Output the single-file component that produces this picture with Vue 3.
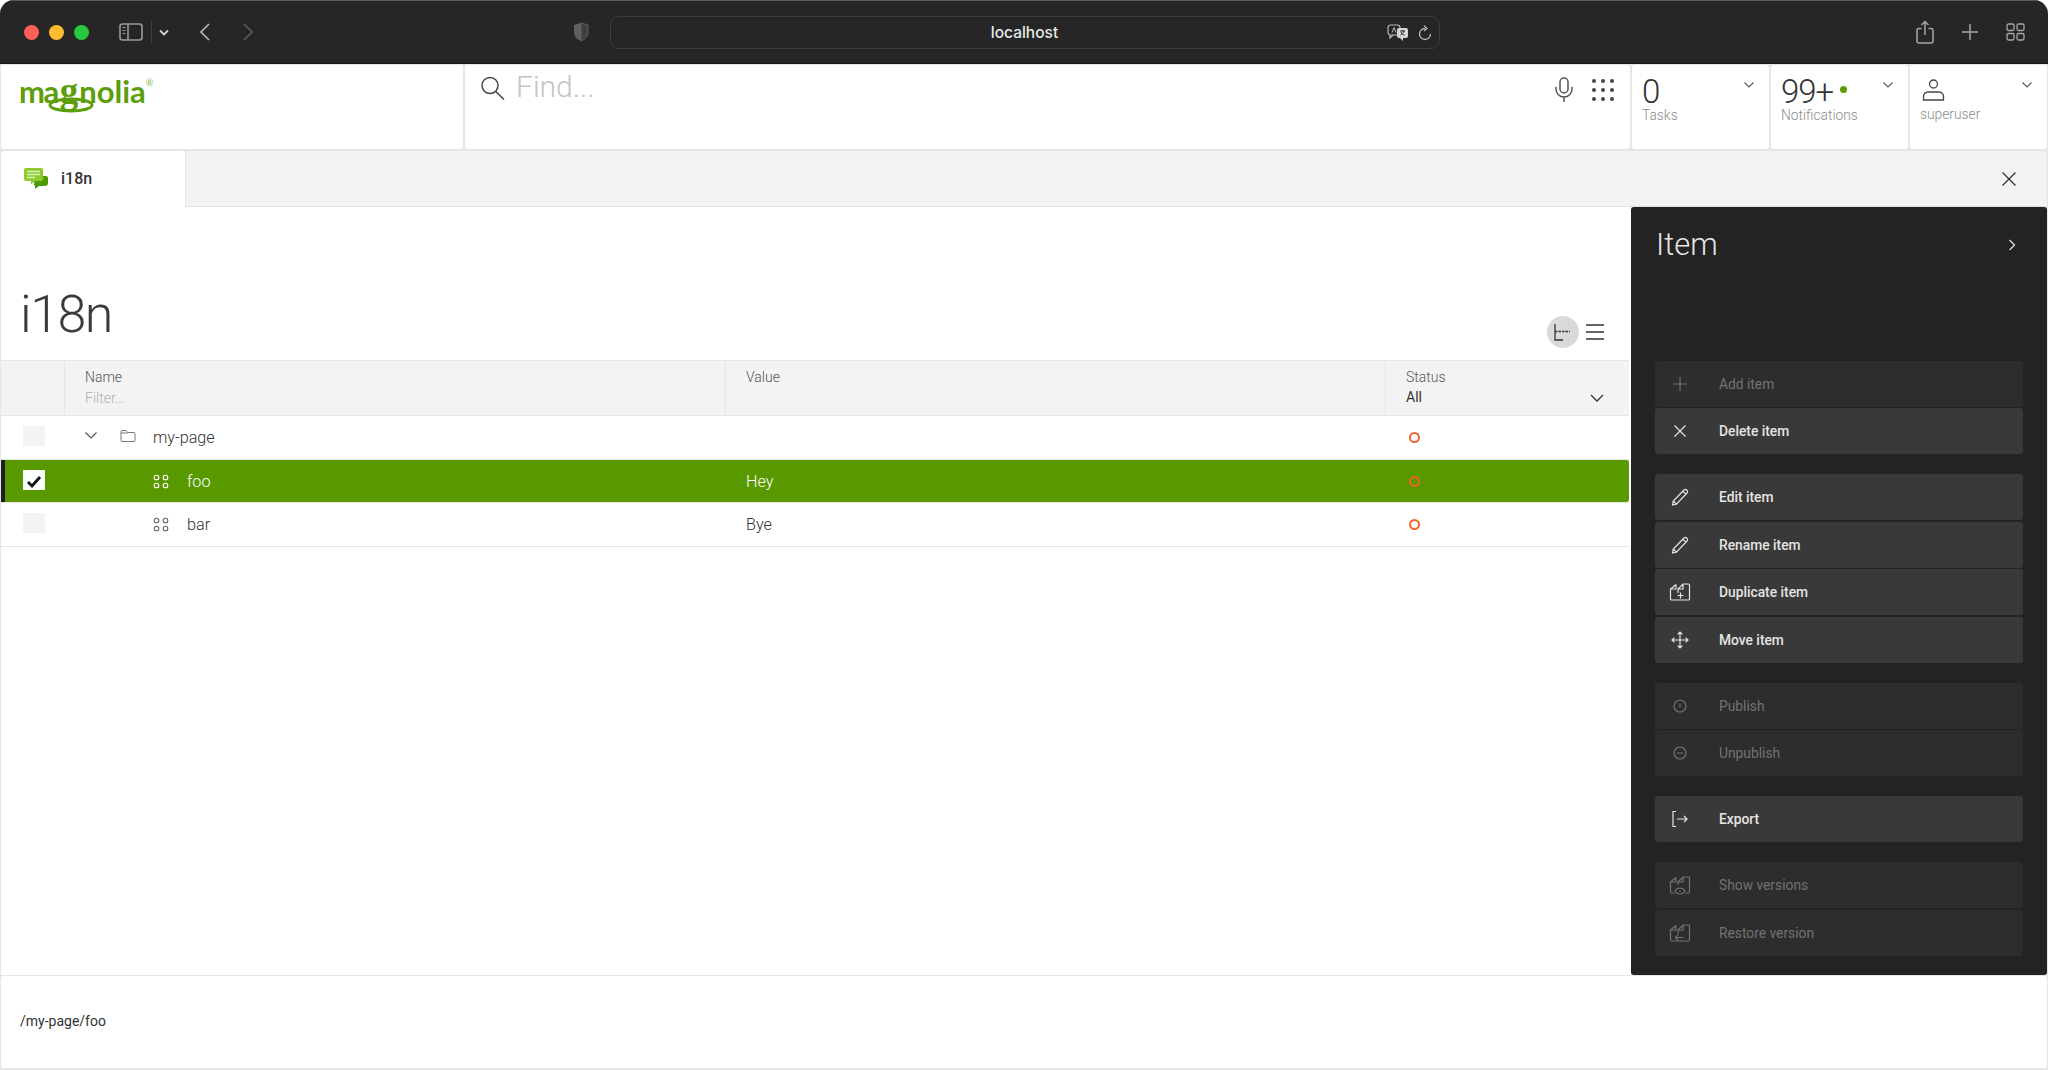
<script setup>
const actionGroups = [
  [
    { label: 'Add item', off: true, d: 'M12 5v14M5 12h14' },
    { label: 'Delete item', d: 'M6.5 6.5l11 11M17.5 6.5l-11 11' }
  ],
  [
    { label: 'Edit item', d: 'M4.5 20l.8-4L16 5a1.9 1.9 0 0 1 2.7 0l.3.3a1.9 1.9 0 0 1 0 2.7L8.4 19.1zM5.3 16l3.1 3.1M14.8 6.2l3 3' },
    { label: 'Rename item', d: 'M4.5 20l.8-4L16 5a1.9 1.9 0 0 1 2.7 0l.3.3a1.9 1.9 0 0 1 0 2.7L8.4 19.1zM5.3 16l3.1 3.1M14.8 6.2l3 3' },
    { label: 'Duplicate item', d: 'M8 4.5L2.500 9v10a1 1 0 0 0 1 1H20.500a1 1 0 0 0 1-1V5a1 1 0 0 0-1-1H15l-5 5v4M2.500 9H8V4.500M15 4v5h-5M9.500 15.500h6M12.500 12.500v6' },
    { label: 'Move item', d: 'M12 4v16M4 12h16M9.6 6.4L12 4l2.4 2.4M9.6 17.6L12 20l2.4-2.4M6.4 9.6L4 12l2.4 2.4M17.6 9.6L20 12l-2.4 2.4' }
  ],
  [
    { label: 'Publish', off: true, d: 'M12 6a6 6 0 1 0 0 12 6 6 0 0 0 0-12zM12 9.5v4' },
    { label: 'Unpublish', off: true, d: 'M12 6a6 6 0 1 0 0 12 6 6 0 0 0 0-12zM9 12h6' }
  ],
  [
    { label: 'Export', d: 'M8 4.5H5v15h3M9 12h10M16 9l3 3-3 3' }
  ],
  [
    { label: 'Show versions', off: true, d: 'M8 4.5L2.500 9v10a1 1 0 0 0 1 1h3M17.500 20h3a1 1 0 0 0 1-1V5a1 1 0 0 0-1-1H15l-5 5v3M2.500 9H8V4.500M15 4v5h-5M7 18s2-3 5-3 5 3 5 3-2 3-5 3-5-3-5-3zM12 17.200v1.500' },
    { label: 'Restore version', off: true, d: 'M8 4.5L2.500 9v10a1 1 0 0 0 1 1H20.500a1 1 0 0 0 1-1V5a1 1 0 0 0-1-1H15l-5 5v4M2.500 9H8V4.500M15 4v5h-5M7.500 16.500h8M10 14l-2.500 2.500L10 19' }
  ]
]

const rows = [
  { name: 'my-page', value: '', folder: true },
  { name: 'foo', value: 'Hey', selected: true },
  { name: 'bar', value: 'Bye' }
]

const dots = Array.from({ length: 9 })

const indicators = [
  { big: '0', label: 'Tasks' },
  { big: '99+', label: 'Notifications', dot: true }
]
</script>

<template>
  <div class="window">
    <div class="toolbar">
      <div class="lights">
        <span class="light red"></span>
        <span class="light yellow"></span>
        <span class="light green"></span>
      </div>
      <svg class="tb sidebar" width="24" height="18" viewBox="0 0 24 18" fill="none" stroke="#9a9a9a" stroke-width="1.6">
        <rect x="1" y="1" width="22" height="16" rx="2.5" />
        <path d="M9 1v16" />
        <path d="M3.5 4.5h3M3.5 7.5h3M3.5 10.5h3" stroke-width="1.2" />
      </svg>
      <span class="tb-divider"></span>
      <svg class="tb" width="10" height="7" viewBox="0 0 10 7" fill="none" stroke="#d0d0d0" stroke-width="1.8">
        <path d="M1 1.5l4 4 4-4" />
      </svg>
      <svg class="tb back" width="11" height="18" viewBox="0 0 11 18" fill="none" stroke="#b5b5b5" stroke-width="1.7">
        <path d="M10 1L2 9l8 8" />
      </svg>
      <svg class="tb forward" width="11" height="18" viewBox="0 0 11 18" fill="none" stroke="#5c5c5c" stroke-width="1.7">
        <path d="M1 1l8 8-8 8" />
      </svg>
      <svg class="tb shield" width="18" height="20" viewBox="0 0 18 20">
        <path d="M9 1L2 3v7c0 4.500 3 7.500 7 9z" fill="#5f5f5f" />
        <path d="M9 1l7 2v7c0 4.500-3 7.500-7 9z" fill="#3f3f3f" stroke="#5f5f5f" />
      </svg>
      <div class="urlbar">
        <span class="url">localhost</span>
        <svg class="translate" width="22" height="17" viewBox="0 0 22 17" fill="none">
          <rect x="1" y="1" width="12" height="10" rx="2.500" stroke="#b8b8b8" stroke-width="1.200" />
          <path d="M3 11v3l3-3" stroke="#b8b8b8" stroke-width="1.200" />
          <path d="M5 8.500l2-5 2 5" stroke="#b8b8b8" stroke-width="1" />
          <rect x="10" y="4" width="11" height="10" rx="2" fill="#d6d6d6" />
          <path d="M16 14v3l-3-3z" fill="#d6d6d6" />
          <path d="M13 7h5M15.500 6v1M17 7c-.5 2-2 3.500-3.500 4M14 8c.5 1.500 2 2.800 3.500 3" stroke="#262626" stroke-width="1" />
        </svg>
        <svg class="reload" width="14" height="16" viewBox="0 0 14 16" fill="none" stroke="#b8b8b8" stroke-width="1.300">
          <path d="M7 3.500a5.500 5.500 0 1 0 5.500 5.500" />
          <path d="M6 .8L9 3.500 6 6" />
        </svg>
      </div>
      <div class="tb-right">
        <svg width="18" height="24" viewBox="0 0 18 24" fill="none" stroke="#a6a6a6" stroke-width="1.500">
          <path d="M5.500 8.500H3a2 2 0 0 0-2 2V21a2 2 0 0 0 2 2h12a2 2 0 0 0 2-2V10.500a2 2 0 0 0-2-2h-2.500" />
          <path d="M9 15V1.500M5.500 5L9 1.500 12.500 5" />
        </svg>
        <svg width="18" height="18" viewBox="0 0 18 18" fill="none" stroke="#a6a6a6" stroke-width="1.500">
          <path d="M9 1v16M1 9h16" />
        </svg>
        <svg width="19" height="18" viewBox="0 0 19 18" fill="none" stroke="#a6a6a6" stroke-width="1.300">
          <rect x="1" y="1" width="7" height="6.500" rx="1.500" />
          <rect x="11" y="1" width="7" height="6.500" rx="1.500" />
          <rect x="1" y="10.500" width="7" height="6.500" rx="1.500" />
          <rect x="11" y="10.500" width="7" height="6.500" rx="1.500" />
        </svg>
      </div>
    </div>

    <header class="appbar">
      <div class="cell logo-cell">
        <div class="logo">
          <span class="logo-ma">ma</span><span class="logo-g">g</span><span class="logo-rest">nolia</span><span class="logo-r">®</span>
          <svg class="logo-loop" width="46" height="16" viewBox="0 0 46 16" fill="none">
            <ellipse cx="23" cy="8" rx="21" ry="6" stroke="#5c9e0c" stroke-width="3" />
          </svg>
        </div>
      </div>
      <div class="cell search-cell">
        <svg class="search-icon" width="25" height="24" viewBox="0 0 25 24" fill="none" stroke="#444" stroke-width="1.500">
          <circle cx="10" cy="9.500" r="8" />
          <path d="M15.800 15.500L24 23.500" />
        </svg>
        <span class="find">Find...</span>
        <svg class="mic" width="18" height="25" viewBox="0 0 18 25" fill="none" stroke="#555" stroke-width="1.500">
          <rect x="5" y="1" width="8" height="15" rx="4" />
          <path d="M1 10v2a8 8 0 0 0 16 0v-2M9 20v5" />
        </svg>
        <div class="apps">
          <span v-for="(d, i) in dots" :key="i" class="app-dot"></span>
        </div>
      </div>
      <div v-for="item in indicators" :key="item.label" class="cell indicator">
        <div class="big">{{ item.big }}<span v-if="item.dot" class="note-dot"></span></div>
        <div class="small">{{ item.label }}</div>
        <svg class="chev" width="10" height="6" viewBox="0 0 10 6" fill="none" stroke="#555" stroke-width="1.100">
          <path d="M.5.500L5 5 9.500.500" />
        </svg>
      </div>
      <div class="cell indicator user">
        <svg class="user-icon" width="23" height="22" viewBox="0 0 23 22" fill="none" stroke="#444" stroke-width="1.300">
          <circle cx="11.500" cy="5" r="4" />
          <path d="M1.500 21v-3.500A4.500 4.500 0 0 1 6 13h11a4.500 4.500 0 0 1 4.500 4.500V21z" />
        </svg>
        <div class="small">superuser</div>
        <svg class="chev" width="10" height="6" viewBox="0 0 10 6" fill="none" stroke="#555" stroke-width="1.100">
          <path d="M.5.500L5 5 9.500.500" />
        </svg>
      </div>
    </header>

    <div class="tabbar">
      <div class="tab">
        <svg width="24" height="21" viewBox="0 0 24 21">
          <path d="M11 8h11a2 2 0 0 1 2 2v5a3 3 0 0 1-3 3h-6l-4 3v-3l-1-1z" fill="#4c9a05" />
          <path d="M2 0h15a2 2 0 0 1 2 2v9a2 2 0 0 1-2 2H11l-4 3.500V13H2a2 2 0 0 1-2-2V2a2 2 0 0 1 2-2z" fill="#8ccb2e" />
          <path d="M3 3.500h13M3 6.500h13M3 9.500h8" stroke="#d9f0b4" stroke-width="1.300" />
        </svg>
        <span class="tab-title">i18n</span>
      </div>
      <div class="tab-rest">
        <svg width="16" height="16" viewBox="0 0 16 16" fill="none" stroke="#333" stroke-width="1.300">
          <path d="M1.500 1.500l13 13M14.500 1.500l-13 13" />
        </svg>
      </div>
    </div>

    <main class="main">
      <section class="workspace">
        <div class="title-row">
          <h1 class="title">i18n</h1>
          <div class="view-toggle">
            <span class="view-btn active">
              <svg width="18" height="18" viewBox="0 0 18 18" fill="none" stroke="#333" stroke-width="1.300">
                <path d="M1 1v16h8" />
                <path d="M1 8.500h15" stroke-dasharray="2.500 1" />
              </svg>
            </span>
            <span class="view-btn">
              <svg width="18" height="16" viewBox="0 0 18 16" fill="none" stroke="#333" stroke-width="1.300">
                <path d="M0 1h18M0 8h18M0 15h18" />
              </svg>
            </span>
          </div>
        </div>

        <div class="grid head">
          <div class="col-check"></div>
          <div class="hcell">
            <span class="hlabel">Name</span>
            <span class="hfilter">Filter...</span>
          </div>
          <div class="hcell">
            <span class="hlabel">Value</span>
          </div>
          <div class="hcell status-head">
            <span class="hlabel">Status</span>
            <span class="hall">All</span>
            <svg class="all-chev" width="14" height="8" viewBox="0 0 14 8" fill="none" stroke="#333" stroke-width="1.300">
              <path d="M1 1l6 6 6-6" />
            </svg>
          </div>
        </div>

        <div class="rows">
          <div v-for="row in rows" :key="row.name" class="grid row" :class="{ selected: row.selected }">
            <div class="check-cell">
              <span class="checkbox">
                <svg v-if="row.selected" width="16" height="14" viewBox="0 0 16 14" fill="none" stroke="#111" stroke-width="2.800">
                  <path d="M2 8l4 4 8-9" />
                </svg>
              </span>
            </div>
            <div class="name-cell" :class="{ child: !row.folder }">
              <template v-if="row.folder">
                <svg class="expand" width="12" height="7" viewBox="0 0 12 7" fill="none" stroke="#555" stroke-width="1.200">
                  <path d="M.5.500L6 6 11.500.500" />
                </svg>
                <svg class="folder" width="16" height="12" viewBox="0 0 16 12" fill="none" stroke="#777" stroke-width="1">
                  <path d="M1 10.500v-9a1 1 0 0 1 1-1h4l1.500 2H14a1 1 0 0 1 1 1v7a1 1 0 0 1-1 1H2a1 1 0 0 1-1-1zM1 3h6.500" />
                </svg>
              </template>
              <svg v-else class="node" width="16" height="15" viewBox="0 0 16 15" fill="none" stroke="currentColor" stroke-width="1.100">
                <circle cx="3.500" cy="3.500" r="2.300" />
                <circle cx="12.500" cy="3.500" r="2.300" />
                <circle cx="3.500" cy="11.500" r="2.300" />
                <circle cx="12.500" cy="11.500" r="2.300" />
              </svg>
              <span class="name">{{ row.name }}</span>
            </div>
            <div class="value-cell">{{ row.value }}</div>
            <div class="status-cell"><span class="ring"></span></div>
          </div>
        </div>
      </section>

      <aside class="panel">
        <div class="panel-head">
          <span class="panel-title">Item</span>
          <svg width="8" height="12" viewBox="0 0 8 12" fill="none" stroke="#ddd" stroke-width="1.300">
            <path d="M1.500 1l5 5-5 5" />
          </svg>
        </div>
        <div class="actions">
          <div v-for="(group, gi) in actionGroups" :key="gi" class="group">
            <div v-for="a in group" :key="a.label" class="action" :class="{ off: a.off }">
              <svg width="24" height="24" viewBox="0 0 24 24" fill="none" stroke="currentColor" stroke-width="1.200">
                <path :d="a.d" />
              </svg>
              <span>{{ a.label }}</span>
            </div>
          </div>
        </div>
      </aside>
    </main>

    <footer class="footer">/my-page/foo</footer>
  </div>
</template>

<style>
html, body { margin: 0; background: #fff; }
</style>

<style scoped>
* { box-sizing: border-box; }
.window {
  width: 2048px;
  height: 1070px;
  overflow: hidden;
  display: flex;
  flex-direction: column;
  background: #e6e6e6;
  border-radius: 14px 14px 0 0;
  font-family: Roboto, "Liberation Sans", sans-serif;
  color: #333;
}
.toolbar {
  height: 64px;
  flex: none;
  background: #262626;
  border-top: 1px solid #5a5a5a;
  border-bottom: 1px solid #161616;
  display: flex;
  align-items: center;
  padding: 0 23px 0 24px;
}
.lights { display: flex; gap: 10px; }
.light { width: 15px; height: 15px; border-radius: 50%; }
.red { background: #fe5f57; }
.yellow { background: #febc2e; }
.green { background: #28c840; }
.sidebar { margin-left: 30px; }
.tb-divider { width: 1px; height: 22px; background: #3f3f3f; margin: 0 7px 0 8px; }
.back { margin-left: 29.500px; }
.forward { margin-left: 33px; }
.shield { margin-left: 318px; }
.urlbar {
  width: 830px;
  height: 33px;
  margin-left: 20px;
  border: 1px solid #3d3d3d;
  border-radius: 9px;
  display: flex;
  align-items: center;
  justify-content: center;
  position: relative;
}
.url {
  font-family: Inter, "Liberation Sans", sans-serif;
  font-size: 15.500px;
  font-weight: 500;
  color: #e8e8e8;
}
.translate { position: absolute; left: 776px; top: 7px; }
.reload { position: absolute; left: 807px; top: 8px; }
.tb-right {
  margin-left: auto;
  display: flex;
  align-items: center;
  gap: 27px;
}
.appbar {
  height: 87px;
  flex: none;
  display: grid;
  grid-template-columns: 462px 1165px 137px 137px 137px;
  gap: 2px;
  padding: 1px 1px 2px;
}
.cell { background: #fff; border-radius: 3px; position: relative; }
.logo-cell { padding: 8px 0 0 18px; }
.logo {
  font-family: Lato, sans-serif;
  font-weight: 700;
  font-size: 31px;
  line-height: 36px;
  color: #5c9e0c;
  display: flex;
  align-items: baseline;
  position: relative;
}
.logo-ma { letter-spacing: -1.500px; }
.logo-g {
  font-family: "Liberation Serif", serif;
  font-size: 37px;
  line-height: 30px;
  margin: 0 0 0 2px;
}
.logo-rest { margin-left: 1px; }
.logo-r {
  font-size: 9px;
  line-height: 9px;
  align-self: flex-start;
  margin-top: 5px;
  color: #84b850;
  font-weight: 400;
}
.logo-loop { position: absolute; left: 29px; top: 24px; }
.search-cell {
  display: flex;
  align-items: flex-start;
  padding: 11px 0 0 15px;
}
.find {
  font-size: 30px;
  font-weight: 300;
  line-height: 24px;
  color: #c4c4c4;
  margin: -1px 0 0 11px;
}
.mic { margin-left: auto; margin-top: 1px; }
.apps {
  display: grid;
  grid-template-columns: repeat(3, 4px);
  gap: 5px;
  margin: 3px 16px 0 19px;
}
.app-dot { width: 4px; height: 4px; border-radius: 50%; background: #444; }
.indicator { padding: 10px 0 0 10px; }
.big {
  font-size: 33px;
  font-weight: 300;
  line-height: 34px;
  color: #333;
  display: flex;
  letter-spacing: -1px;
}
.note-dot {
  width: 7px;
  height: 7px;
  border-radius: 50%;
  background: #599b00;
  margin: 11px 0 0 7px;
}
.small {
  font-size: 13.800px;
  font-weight: 300;
  line-height: 18px;
  color: #8c8c8c;
  margin-top: -3px;
}
.chev { position: absolute; right: 15px; top: 17px; }
.user { padding-left: 10px; }
.user-icon { display: block; margin: 4px 0 4px 2px; }
.user .small { margin-top: 0; }
.tabbar {
  height: 55px;
  flex: none;
  display: flex;
  padding: 0 1px;
}
.tab {
  width: 184px;
  background: #fff;
  border-radius: 3px 3px 0 0;
  display: flex;
  align-items: center;
  gap: 13px;
  padding: 0 0 2px 23px;
  margin-bottom: -1px;
  position: relative;
}
.tab-title { font-size: 16px; font-weight: 500; color: #333; }
.tab-rest {
  flex: 1;
  background: #f3f3f3;
  margin-left: 1px;
  border-radius: 3px 3px 0 0;
  display: flex;
  align-items: center;
  justify-content: flex-end;
  padding: 0 30px 0 0;
}
.main {
  height: 770px;
  flex: none;
  display: flex;
  padding: 0 1px;
  background: #e6e6e6;
  border-top: 1px solid #e0e0e0;
}
.workspace {
  width: 1630px;
  flex: none;
  background: #fff;
  display: flex;
  flex-direction: column;
  padding-right: 2px;
  margin-bottom: 1px;
}
.title-row {
  height: 153px;
  flex: none;
  display: flex;
  align-items: flex-end;
  justify-content: space-between;
  padding: 0 25px 12px 19px;
}
.title {
  margin: 0 0 6px;
  font-size: 52px;
  font-weight: 300;
  line-height: 54px;
  color: #3a3a3a;
  letter-spacing: -1.500px;
}
.view-toggle { display: flex; align-items: center; gap: 7px; }
.view-btn { height: 32px; display: flex; align-items: center; justify-content: center; }
.view-btn.active { width: 32px; border-radius: 50%; background: #d9d9d9; }
.grid {
  display: grid;
  grid-template-columns: 63px 660px 659px 1fr;
  column-gap: 1px;
}
.head {
  height: 56px;
  flex: none;
  background: #e6e6e6;
  border-top: 1px solid #e6e6e6;
  border-bottom: 1px solid #e6e6e6;
}
.col-check { background: #f3f3f3; }
.hcell {
  background: #f3f3f3;
  padding: 6px 20px 0;
  display: flex;
  flex-direction: column;
  position: relative;
  font-size: 14px;
  line-height: 20px;
}
.hlabel { font-weight: 300; color: #555; }
.hfilter { font-weight: 300; color: #b0b0b0; margin-top: 1px; }
.hall { font-weight: 400; color: #333; }
.all-chev { position: absolute; right: 25px; top: 33px; }
.rows {
  display: flex;
  flex-direction: column;
  gap: 1px;
  background: #e6e6e6;
  padding-bottom: 1px;
}
.row {
  height: 42.700px;
  background: #fff;
  font-size: 16.200px;
  font-weight: 300;
  color: #333;
  align-items: center;
}
.row.selected {
  background: #599900;
  color: #fff;
  box-shadow: inset 4px 0 0 #1f1f1f;
  border-radius: 0 3px 3px 0;
}
.check-cell { padding-left: 22px; display: flex; }
.checkbox {
  width: 22px;
  height: 20px;
  margin-top: -3px;
  background: #f3f3f3;
  display: flex;
  align-items: center;
  justify-content: center;
}
.selected .checkbox { background: #fff; }
.selected .checkbox svg { margin-top: 2px; }
.name-cell {
  display: flex;
  align-items: center;
  padding-left: 20px;
}
.name-cell.child { padding-left: 88px; }
.expand { margin-top: -3px; }
.folder { margin: -3px 0 0 23px; }
.name { margin-left: 18px; }
.name-cell:not(.child) .name { margin-left: 17px; }
.node { color: #666; }
.selected .node { color: #fff; }
.value-cell { padding-left: 20px; }
.status-cell { padding-left: 23px; display: flex; }
.ring {
  width: 11px;
  height: 11px;
  border: 2px solid #f2632a;
  border-radius: 50%;
}
.panel {
  flex: 1;
  background: #232323;
  border-radius: 3px;
  padding: 0 24px;
  margin-bottom: 1px;
  display: flex;
  flex-direction: column;
}
.panel-head {
  height: 153.500px;
  flex: none;
  display: flex;
  justify-content: space-between;
  padding: 20px 7px 0 1px;
}
.panel-title {
  font-size: 31px;
  font-weight: 300;
  line-height: 36px;
  color: #e6e6e6;
}
.panel-head svg { margin: 12px 0 0; }
.actions { display: flex; flex-direction: column; gap: 20px; }
.group { display: flex; flex-direction: column; gap: 1.500px; }
.action {
  height: 46px;
  background: #393939;
  border-radius: 3px;
  display: flex;
  align-items: center;
  gap: 27px;
  padding-left: 13px;
  color: #e4e4e4;
  font-size: 13.800px;
  font-weight: 500;
}
.action.off {
  background: #2d2d2d;
  color: #737373;
  font-weight: 400;
}
.footer {
  height: 92px;
  flex: none;
  margin: 0 1px;
  background: #fff;
  border-radius: 3px;
  padding: 35px 0 0 19px;
  font-size: 14px;
  line-height: 20px;
  color: #333;
}
</style>
